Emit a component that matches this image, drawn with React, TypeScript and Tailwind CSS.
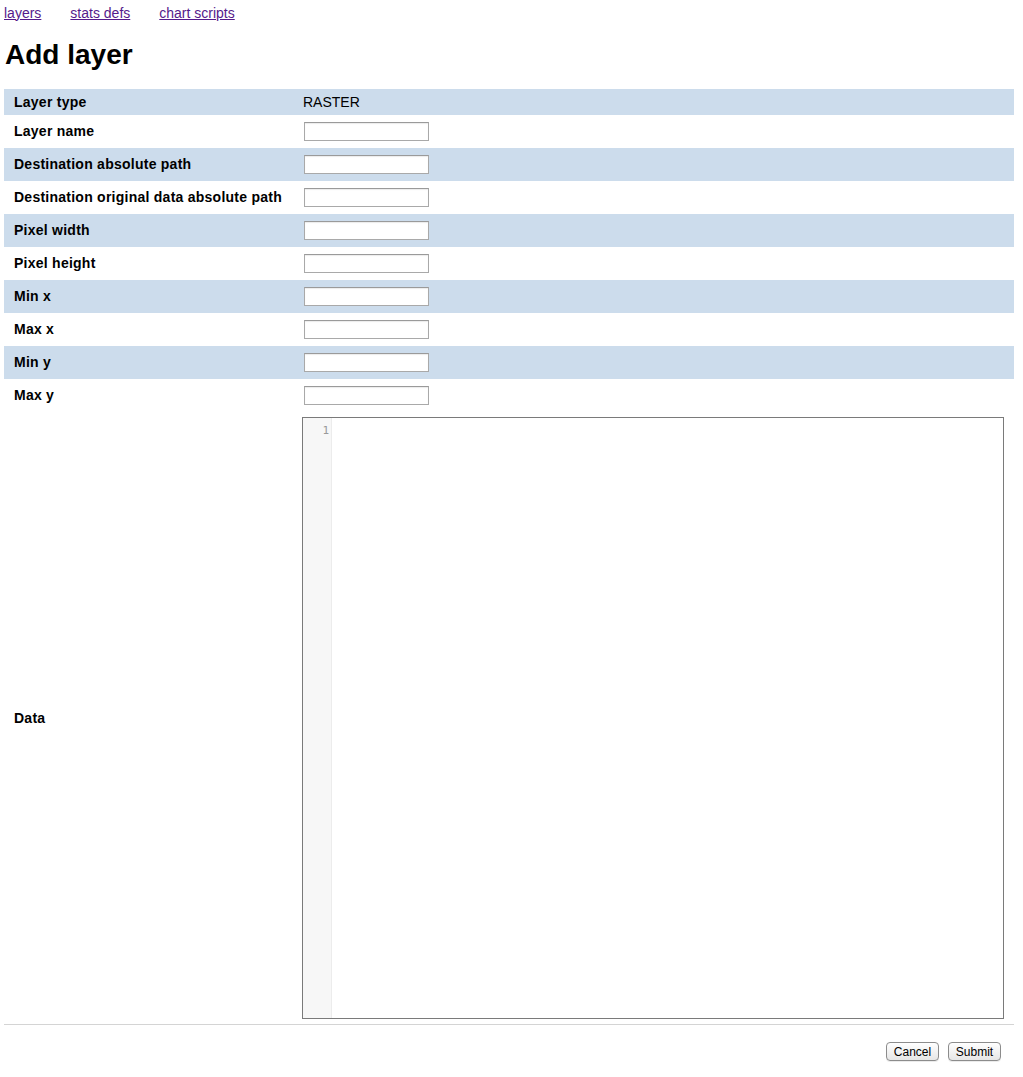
const fields = [
  "Layer name",
  "Destination absolute path",
  "Destination original data absolute path",
  "Pixel width",
  "Pixel height",
  "Min x",
  "Max x",
  "Min y",
  "Max y",
];

const navLinks = ["layers", "stats defs", "chart scripts"];

const TextInput = () => (
  <input
    type="text"
    className="h-[19px] w-[125px] border border-[#a9a9a9] border-t-[#9a9a9a] bg-white shadow-[inset_0_1px_1px_rgba(0,0,0,0.08)] outline-none"
  />
);

const MacButton = ({ label }: { label: string }) => (
  <button className="h-[19px] w-[53px] rounded-[4px] border border-[#8c8c8c] bg-gradient-to-b from-white to-[#e6e6e6] text-[12px] leading-none text-black shadow-[0_1px_0_rgba(0,0,0,0.08)]">
    {label}
  </button>
);

export default function App() {
  return (
    <div className="min-h-[1077px] bg-white font-['Liberation_Sans',Arial,sans-serif] text-black">
      {/* top links */}
      <nav className="flex h-[26px] items-center gap-[29px] pl-1 text-[14px]">
        {navLinks.map((name) => (
          <a key={name} href="#" className="text-[#551a8b] underline">
            {name}
          </a>
        ))}
      </nav>

      <h1 className="mt-[13px] mb-[18px] pl-[5px] text-[28px] font-bold leading-[32px]">
        Add layer
      </h1>

      <div className="ml-1 mr-[9px] text-[14px]">
        <div className="flex h-[26px] items-center bg-[#ccdcec]">
          <div className="w-[296px] pl-[10px] font-bold tracking-[0.25px]">Layer type</div>
          <div className="pl-[3px]">RASTER</div>
        </div>

        {fields.map((label, index) => (
          <div
            key={label}
            className={
              index % 2 === 1
                ? "flex h-[33px] items-center bg-[#ccdcec]"
                : "flex h-[33px] items-center bg-white"
            }
          >
            <div className="w-[296px] pl-[10px] font-bold tracking-[0.25px]">{label}</div>
            <div className="pl-1">
              <TextInput />
            </div>
          </div>
        ))}

        <div className="flex items-center py-[5px]">
          <div className="w-[296px] pl-[10px] font-bold tracking-[0.25px]">Data</div>
          <div className="pl-[2px]">
            <div className="flex h-[602px] w-[702px] border border-[#7a7a7a] bg-white">
              <div className="w-[29px] border-r border-[#ececec] bg-[#f7f7f7] pt-[6px] pr-[2px] text-right font-['DejaVu_Sans_Mono',monospace] text-[11px] leading-[14px] text-[#999]">
                1
              </div>
              <div className="flex-1" />
            </div>
          </div>
        </div>

        <div className="flex justify-end gap-[9px] border-t border-[#d4d4d4] pt-[17px] pr-[13px]">
          <MacButton label="Cancel" />
          <MacButton label="Submit" />
        </div>
      </div>
    </div>
  );
}
